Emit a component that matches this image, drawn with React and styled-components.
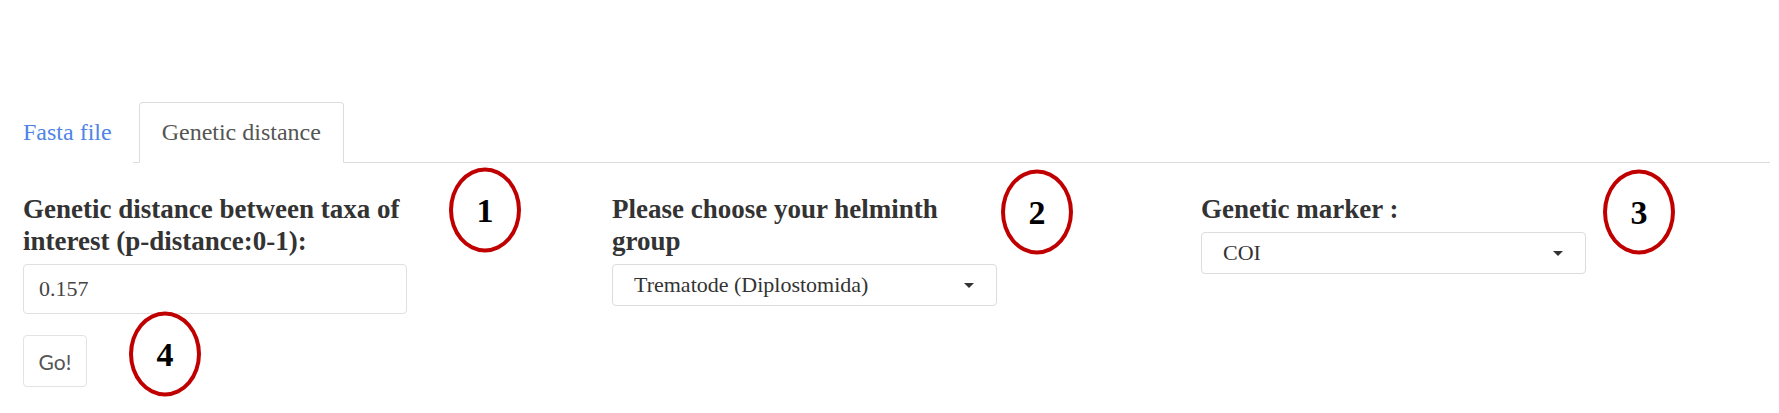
import React from 'react';
import styled, { createGlobalStyle } from 'styled-components';

const GlobalStyle = createGlobalStyle`
  html, body {
    margin: 0;
    padding: 0;
    background: #fff;
  }
  body {
    font-family: 'Liberation Serif', 'Times New Roman', serif;
    color: #333;
  }
`;

const Page = styled.div`
  position: relative;
  width: 1779px;
  height: 413px;
  padding: 102px 9px 0 2px;
  box-sizing: border-box;
`;

const TabBar = styled.ul`
  display: flex;
  gap: 6px;
  margin: 0;
  padding: 0;
  list-style: none;
  border-bottom: 1px solid #dddddd;
`;

const Tab = styled.li`
  height: 59px;
  display: flex;
  align-items: center;
  padding: 0 ${(p) => (p.$active ? 22 : 20)}px;
  margin-bottom: -1px;
  font-size: 24px;
  color: ${(p) => (p.$active ? '#555' : '#4f84e6')};
  background: #fff;
  border: 1px solid ${(p) => (p.$active ? '#dddddd' : 'transparent')};
  border-bottom-color: ${(p) => (p.$active ? '#fff' : 'transparent')};
  border-radius: 4px 4px 0 0;
  cursor: pointer;
`;

const Panel = styled.div`
  display: grid;
  grid-template-columns: repeat(3, 589px);
  padding: 30px 0 0 21px;
`;

const Field = styled.div`
  display: flex;
  flex-direction: column;
  align-items: flex-start;
`;

const Label = styled.label`
  width: 392px;
  margin-bottom: 7px;
  font-size: 27px;
  font-weight: bold;
  line-height: 32px;
  color: #333;
`;

const TextInput = styled.input`
  width: 384px;
  height: 50px;
  box-sizing: border-box;
  padding: 0 15px;
  font-family: 'Liberation Serif', 'Times New Roman', serif;
  font-size: 22px;
  color: #444;
  border: 1px solid #e0e0e0;
  border-radius: 4px;
  outline: none;
`;

const SelectBox = styled.div`
  width: 385px;
  height: 42px;
  box-sizing: border-box;
  display: flex;
  align-items: center;
  justify-content: space-between;
  padding: 0 22px 0 21px;
  font-size: 22px;
  color: #333;
  border: 1px solid #dcdcdc;
  border-radius: 4px;
`;

const Caret = styled.span`
  width: 0;
  height: 0;
  border-left: 5px solid transparent;
  border-right: 5px solid transparent;
  border-top: 5px solid #333;
`;

const Button = styled.button`
  margin-top: 21px;
  width: 64px;
  height: 52px;
  padding: 0;
  font-family: 'Lato', 'Open Sans', sans-serif;
  font-size: 21px;
  color: #555;
  background: #fff;
  border: 1px solid #e3e3e3;
  border-radius: 4px;
`;

const Marker = styled.div`
  position: absolute;
  width: 64px;
  height: 77px;
  display: flex;
  align-items: center;
  justify-content: center;
  border: 4px solid #c00000;
  border-radius: 50%;
  transform: translate(-50%, -50%);
  font-size: 34px;
  font-weight: bold;
  color: #000;
`;

const markers = [
  { n: 1, x: 485, y: 210 },
  { n: 2, x: 1037, y: 212 },
  { n: 3, x: 1639, y: 212 },
  { n: 4, x: 165, y: 354 },
];

const Select = ({ value }) => (
  <SelectBox>
    <span>{value}</span>
    <Caret />
  </SelectBox>
);

const App = () => (
  <>
    <GlobalStyle />
    <Page>
      <TabBar>
        <Tab>Fasta file</Tab>
        <Tab $active>Genetic distance</Tab>
      </TabBar>
      <Panel>
        <Field>
          <Label>Genetic distance between taxa of interest (p-distance:0-1):</Label>
          <TextInput defaultValue="0.157" />
          <Button>Go!</Button>
        </Field>
        <Field>
          <Label>Please choose your helminth group</Label>
          <Select value="Trematode (Diplostomida)" />
        </Field>
        <Field>
          <Label>Genetic marker :</Label>
          <Select value="COI" />
        </Field>
      </Panel>
      {markers.map((m) => (
        <Marker key={m.n} style={{ left: m.x, top: m.y }}>
          {m.n}
        </Marker>
      ))}
    </Page>
  </>
);

export default App;
